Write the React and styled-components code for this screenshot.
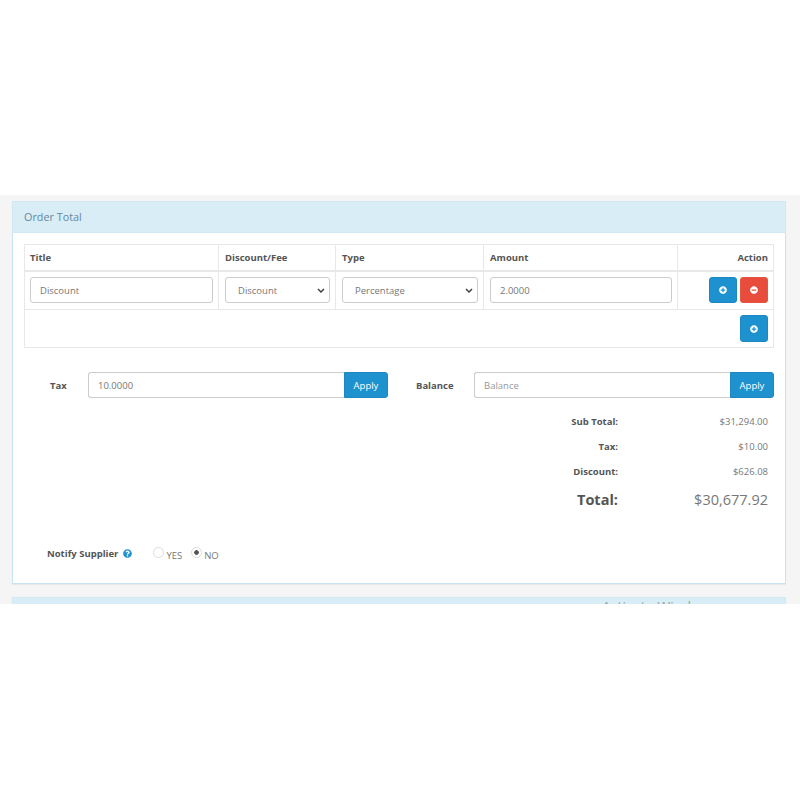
import React from 'react';
import styled, { createGlobalStyle } from 'styled-components';
import { FaPlusCircle, FaMinusCircle, FaQuestionCircle } from 'react-icons/fa';

const chevron = "url(\"data:image/svg+xml,%3Csvg xmlns='http://www.w3.org/2000/svg' width='8' height='5' viewBox='0 0 8 5'%3E%3Cpath d='M1 1l3 3 3-3' fill='none' stroke='%23444' stroke-width='1.5'/%3E%3C/svg%3E\")";

const GlobalStyle = createGlobalStyle`
  html, body {
    margin: 0;
    padding: 0;
    background: #fff;
    font-family: "Open Sans", "Liberation Sans", sans-serif;
    font-size: 11px;
    color: #666;
  }
  * { box-sizing: border-box; }
`;

const Page = styled.div`
  width: 800px;
  height: 800px;
  padding-top: 195px;
  background: #fff;
`;

const Band = styled.div`
  position: relative;
  height: 409px;
  padding: 6px 14px 0 12px;
  background: #f5f5f5;
  overflow: hidden;
`;

const Panel = styled.section`
  height: 383px;
  margin-bottom: 13px;
  background: #fff;
  border: 1px solid #c6e5f0;
  box-shadow: 0 1px 1px rgba(0, 0, 0, 0.05);
`;

const PanelHeading = styled.div`
  height: 32px;
  margin: -1px -1px 0;
  padding: 0 11px;
  background: #d9edf7;
  border: 1px solid #d0e9f3;
  color: #64899f;
  font-size: 10.8px;
  line-height: 30px;
`;

const PanelBody = styled.div`
  padding: 11px 11px 0;
`;

const Watermark = styled.span`
  position: absolute;
  left: 602px;
  top: 402px;
  color: #9aa3a8;
  font-size: 14px;
  line-height: 20px;
  white-space: nowrap;
`;

const Table = styled.table`
  width: 749px;
  border-collapse: collapse;
  table-layout: fixed;
`;

const Th = styled.th`
  height: 26px;
  padding: 0 5px 0 6px;
  border: 1px solid #e8e8e8;
  border-bottom-width: 2px;
  color: #555;
  font-size: 9.5px;
  font-weight: 700;
  text-align: ${(p) => (p.$right ? 'right' : 'left')};

  &:first-child {
    padding-left: 5px;
  }
`;

const Td = styled.td`
  height: ${(p) => p.$height || 39}px;
  padding: 0 5px 0 6px;
  border: 1px solid #e8e8e8;
  text-align: ${(p) => (p.$right ? 'right' : 'left')};

  &:first-child {
    padding-left: 5px;
  }
`;

const TextInput = styled.input`
  display: block;
  width: 100%;
  height: 26px;
  padding: 0 9px;
  background: #fff;
  border: 1px solid #ccc;
  border-radius: 3px;
  color: #777;
  font-family: inherit;
  font-size: 9.5px;
  outline: none;

  &::placeholder {
    color: #999;
    opacity: 1;
  }
`;

const Select = styled.select`
  display: block;
  width: 100%;
  height: 26px;
  padding: 0 16px 0 12px;
  appearance: none;
  background: #fff ${chevron} no-repeat right 4px center;
  border: 1px solid #ccc;
  border-radius: 3px;
  color: #777;
  font-family: inherit;
  font-size: 9.5px;
  outline: none;
`;

const IconButton = styled.button`
  display: inline-flex;
  align-items: center;
  justify-content: center;
  width: 28px;
  height: ${(p) => (p.$tall ? '27px' : '26px')};
  margin-left: 3px;
  padding: 0;
  background: ${(p) => (p.$danger ? '#e74c3c' : '#1e91cf')};
  border: 1px solid ${(p) => (p.$danger ? '#e6553f' : '#1c88c2')};
  border-radius: 3px;
  color: #fff;
  font-size: 8px;
  vertical-align: middle;
`;

const FormRow = styled.div`
  display: flex;
  margin-top: 24px;
`;

const InputGroup = styled.div`
  display: flex;
  align-items: center;
  width: ${(p) => p.$width}px;
  margin-right: ${(p) => p.$gap || 0}px;
  padding-left: ${(p) => p.$indent || 0}px;
`;

const GroupLabel = styled.label`
  flex: 0 0 ${(p) => p.$width}px;
  color: #555;
  font-size: 9.5px;
  font-weight: 700;
`;

const GroupInput = styled(TextInput)`
  flex: 1;
  width: auto;
  border-right: 0;
  border-radius: 3px 0 0 3px;
`;

const ApplyButton = styled.button`
  flex: 0 0 44px;
  height: 26px;
  padding: 0;
  background: #1e91cf;
  border: 1px solid #1c88c2;
  border-radius: 0 3px 3px 0;
  color: #fff;
  font-family: inherit;
  font-size: 9.5px;
`;

const Totals = styled.div`
  display: grid;
  grid-template-columns: 594px 150px;
  grid-template-rows: repeat(3, 25px) 31px;
  align-items: center;
  margin-top: 11px;
`;

const TotalLabel = styled.div`
  color: #555;
  font-size: ${(p) => (p.$big ? '14.5px' : '9.5px')};
  font-weight: 700;
  text-align: right;
`;

const TotalValue = styled.div`
  color: #777;
  font-size: ${(p) => (p.$big ? '14.5px' : '9.5px')};
  text-align: right;
`;

const BigRow = styled.div`
  display: contents;
`;

const NotifyRow = styled.div`
  display: flex;
  align-items: center;
  margin-top: 32px;
  padding-left: 23px;
`;

const NotifyLabel = styled.span`
  color: #555;
  font-size: 9.5px;
  font-weight: 700;
`;

const Help = styled.span`
  display: inline-flex;
  margin-left: 5px;
  margin-right: 21px;
  color: #1e91cf;
  font-size: 9px;
`;

const RadioLabel = styled.label`
  display: inline-flex;
  align-items: center;
  margin-right: 9px;
  color: #777;
  font-size: 9.5px;
`;

const YesNoText = styled.span`
  position: relative;
  top: 2px;
`;

const Radio = styled.input`
  appearance: none;
  width: 11px;
  height: 11px;
  margin: -3px 2px 0 0;
  background: #fff;
  border: 1px solid #ddd;
  border-radius: 50%;

  &:checked {
    background: radial-gradient(circle, #555 0 2px, #fff 2.6px);
  }
`;

const App = () => {
  const totals = [
    { label: 'Sub Total:', value: '$31,294.00' },
    { label: 'Tax:', value: '$10.00' },
    { label: 'Discount:', value: '$626.08' },
  ];

  return (
    <Page>
      <GlobalStyle />
      <Band>
        <Panel>
          <PanelHeading>Order Total</PanelHeading>
          <PanelBody>
            <Table>
              <colgroup>
                <col width="194" />
                <col width="117" />
                <col width="148" />
                <col width="194" />
                <col width="96" />
              </colgroup>
              <thead>
                <tr>
                  <Th>Title</Th>
                  <Th>Discount/Fee</Th>
                  <Th>Type</Th>
                  <Th>Amount</Th>
                  <Th $right>Action</Th>
                </tr>
              </thead>
              <tbody>
                <tr>
                  <Td><TextInput defaultValue="Discount" /></Td>
                  <Td>
                    <Select defaultValue="Discount">
                      <option>Discount</option>
                      <option>Fee</option>
                    </Select>
                  </Td>
                  <Td>
                    <Select defaultValue="Percentage">
                      <option>Percentage</option>
                      <option>Fixed</option>
                    </Select>
                  </Td>
                  <Td><TextInput defaultValue="2.0000" /></Td>
                  <Td $right>
                    <IconButton><FaPlusCircle /></IconButton>
                    <IconButton $danger><FaMinusCircle /></IconButton>
                  </Td>
                </tr>
                <tr>
                  <Td colSpan={5} $right $height={38}>
                    <IconButton $tall><FaPlusCircle /></IconButton>
                  </Td>
                </tr>
              </tbody>
            </Table>

            <FormRow>
              <InputGroup $width={364} $gap={28} $indent={26}>
                <GroupLabel $width={38}>Tax</GroupLabel>
                <GroupInput defaultValue="10.0000" />
                <ApplyButton>Apply</ApplyButton>
              </InputGroup>
              <InputGroup $width={358}>
                <GroupLabel $width={58}>Balance</GroupLabel>
                <GroupInput placeholder="Balance" />
                <ApplyButton>Apply</ApplyButton>
              </InputGroup>
            </FormRow>

            <Totals>
              {totals.map((row) => (
                <BigRow key={row.label}>
                  <TotalLabel>{row.label}</TotalLabel>
                  <TotalValue>{row.value}</TotalValue>
                </BigRow>
              ))}
              <BigRow>
                <TotalLabel $big>Total:</TotalLabel>
                <TotalValue $big>$30,677.92</TotalValue>
              </BigRow>
            </Totals>

            <NotifyRow>
              <NotifyLabel>Notify Supplier</NotifyLabel>
              <Help><FaQuestionCircle /></Help>
              <RadioLabel><Radio type="radio" name="notify" /><YesNoText>YES</YesNoText></RadioLabel>
              <RadioLabel><Radio type="radio" name="notify" defaultChecked /><YesNoText>NO</YesNoText></RadioLabel>
            </NotifyRow>
          </PanelBody>
        </Panel>
        <Panel>
          <PanelHeading />
        </Panel>
        <Watermark>Activate Windows</Watermark>
      </Band>
    </Page>
  );
};

export default App;
